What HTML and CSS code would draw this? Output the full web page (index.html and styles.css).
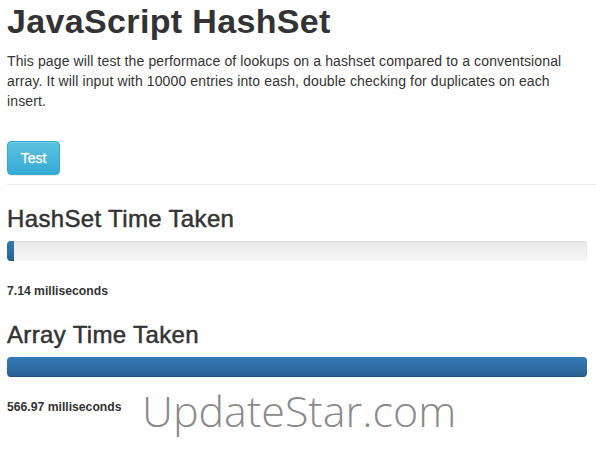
FILE: index.html
```html
<!DOCTYPE html>
<html>
<head>
<meta charset="utf-8">
<title>JavaScript HashSet</title>
<link rel="stylesheet" href="styles.css">
</head>
<body>
<div class="page">
  <h1 class="title">JavaScript HashSet</h1>
  <p class="intro">This page will test the performace of lookups on a hashset compared to a conventsional array. It will input with 10000 entries into eash, double checking for duplicates on each insert.</p>
  <button class="btn-test">Test</button>
  <hr class="divider">
  <h3 class="section-title">HashSet Time Taken</h3>
  <div class="progress"><div class="bar" style="width:1.26%"></div></div>
  <p class="result">7.14 milliseconds</p>
  <h3 class="section-title">Array Time Taken</h3>
  <div class="progress"><div class="bar" style="width:100%"></div></div>
  <p class="result">566.97 milliseconds</p>
  <div class="watermark">UpdateStar.com</div>
</div>
</body>
</html>
```
FILE: styles.css
```css
html, body {
  margin: 0;
  padding: 0;
  background: #fff;
}
body {
  font-family: "Liberation Sans", Arial, sans-serif;
  color: #333;
}
.page {
  position: relative;
  padding: 1px 9px 0 7px;
  height: 461px;
}
.title {
  margin: 0;
  font-size: 34px;
  line-height: 40px;
  font-weight: bold;
  letter-spacing: 0.35px;
  color: #333;
}
.intro {
  margin: 10px 0 0;
  font-size: 14px;
  line-height: 20px;
  letter-spacing: 0.12px;
  color: #333;
}
.btn-test {
  display: block;
  margin-top: 30px;
  height: 34px;
  width: 53px;
  padding: 0;
  font-family: "Liberation Sans", Arial, sans-serif;
  font-size: 14px;
  -webkit-text-stroke: 0.3px #fff;
  color: #fff;
  border: 1px solid #35a9cf;
  border-radius: 4px;
  background: linear-gradient(#5bc2e0, #35abd5);
  text-shadow: 0 -1px 0 rgba(0,0,0,0.15);
  box-shadow: inset 0 1px 0 rgba(255,255,255,0.15), 0 1px 1px rgba(0,0,0,0.075);
}
.divider {
  margin: 9px -9px 0 0;
  border: 0;
  border-top: 1px solid #eee;
  height: 0;
}
.section-title {
  margin: 21px 0 0;
  font-size: 24px;
  line-height: 26px;
  font-weight: normal;
  letter-spacing: 0.35px;
  -webkit-text-stroke: 0.5px #333;
  color: #333;
}
.progress {
  margin-top: 9px;
  height: 20px;
  border-radius: 4px;
  overflow: hidden;
  background: linear-gradient(#ebebeb, #f5f5f5);
  box-shadow: inset 0 1px 2px rgba(0,0,0,0.1);
}
.bar {
  height: 100%;
  background: linear-gradient(#337ab7, #286090);
  box-shadow: inset 0 -1px 0 rgba(0,0,0,0.15);
}
.result {
  margin: 21px 0 0;
  font-size: 12.2px;
  line-height: 18px;
  font-weight: bold;
  color: #333;
}
.result + .section-title {
  margin-top: 22px;
}
.watermark {
  position: absolute;
  left: 142px;
  top: 383px;
  font-family: "Open Sans", "Noto Sans", sans-serif;
  font-weight: 300;
  font-size: 43px;
  line-height: 56px;
  color: #8a8a8a;
  white-space: nowrap;
}
```
